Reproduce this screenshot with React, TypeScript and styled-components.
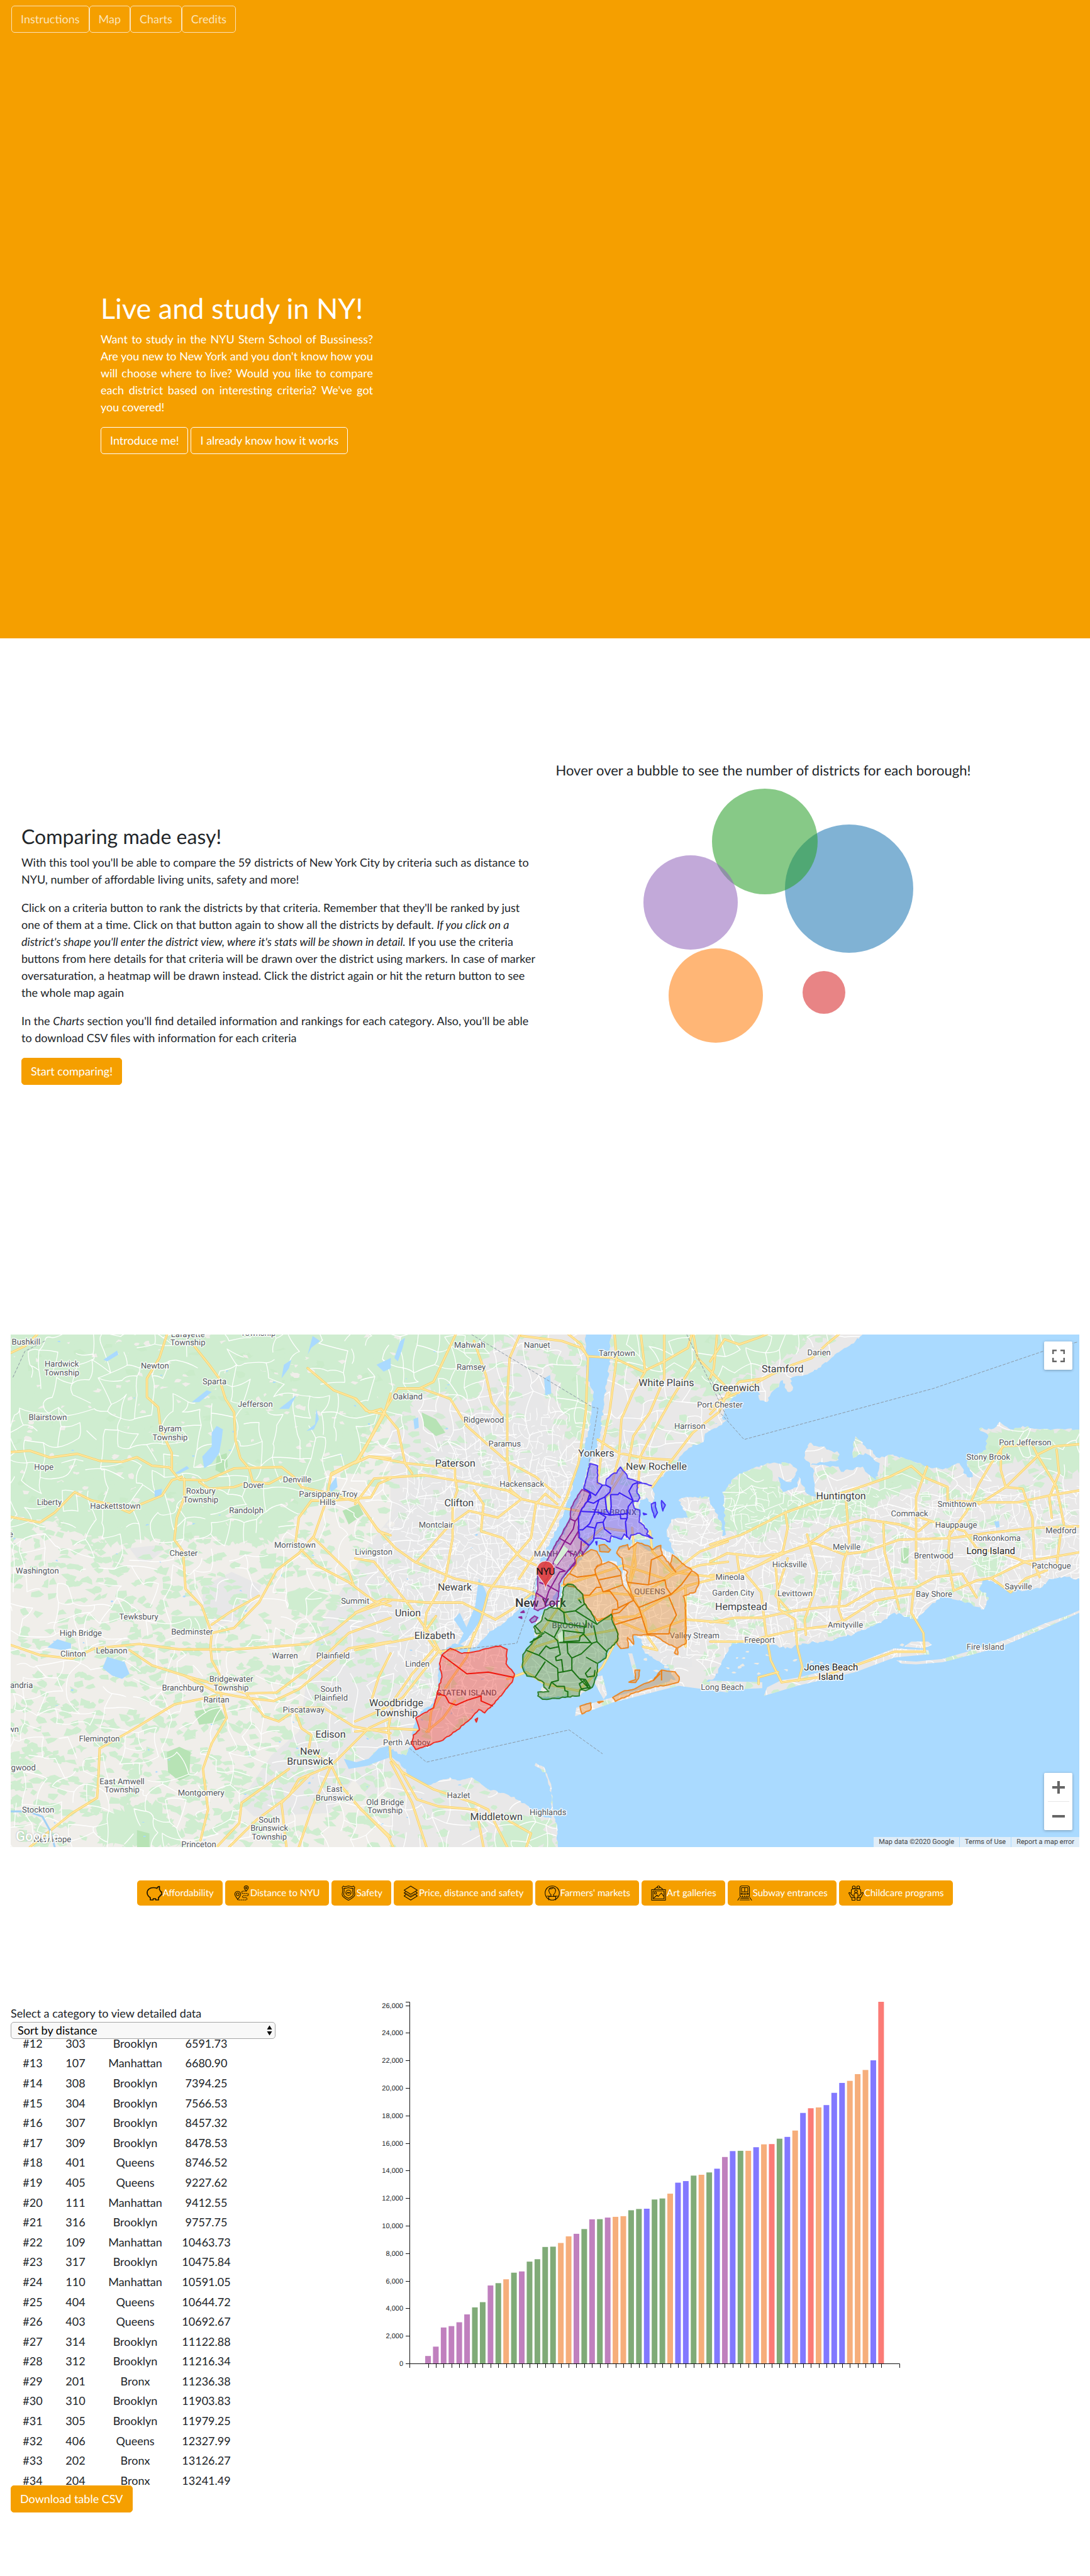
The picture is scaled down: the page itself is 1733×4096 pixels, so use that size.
import React from "react";
import styled, { createGlobalStyle, css } from "styled-components";

const ORANGE = "#f59f00";

const GlobalStyle = createGlobalStyle`
  *, *::before, *::after { box-sizing: border-box; }
  body {
    margin: 0;
    background: #fff;
    color: #212529;
    font-family: Lato, "Open Sans", sans-serif;
    font-size: 18px;
    line-height: 27px;
    text-rendering: geometricPrecision;
  }
`;

/* ---------- shared controls ---------- */

const Button = styled.button<{ $kind?: "solid" | "outline" | "muted" }>`
  padding: 7px 14px;
  border: 1px solid ${ORANGE};
  border-radius: 5px;
  background: ${ORANGE};
  color: #fff;
  font: inherit;
  text-rendering: inherit;
  cursor: pointer;
  ${(p) => p.$kind === "outline" && css`border-color: #fff;`}
  ${(p) =>
    p.$kind === "muted" &&
    css`
      border-color: #fbe3b8;
      color: #fbe3b8;
    `}
`;

/* ---------- hero ---------- */

const Hero = styled.header`
  display: flex;
  flex-direction: column;
  min-height: 1015px;
  background: ${ORANGE};
  color: #fff;
`;

const Nav = styled.nav`
  display: flex;
  padding: 9px 18px;
`;

const HeroBody = styled.div`
  width: 433px;
  margin: 402px 0 0 160px;
`;

const Title = styled.h1`
  margin: 0 0 9px;
  font-size: 45px;
  font-weight: 400;
  line-height: 54px;
`;

const Pitch = styled.p`
  margin: 0 0 18px;
  text-align: justify;
`;

const ButtonRow = styled.div`
  display: flex;
  gap: 4px;
  white-space: nowrap;
`;

/* ---------- instructions ---------- */

const Intro = styled.section`
  display: grid;
  grid-template-columns: 1fr 1fr;
  align-items: center;
  min-height: 1006px;
  padding: 0 17px;
`;

const IntroColumn = styled.div`
  padding-left: 17px;
`;

const Heading = styled.h2`
  margin: 0 0 9px;
  font-size: 32px;
  font-weight: 400;
  line-height: 38px;
`;

const Paragraph = styled.p`
  margin: 0 0 18px;
`;

const Lead = styled.p`
  margin: 0 0 5px;
  font-size: 22px;
  line-height: 33px;
`;

const Bubbles = styled.svg`
  display: block;
  width: 100%;
  height: 582px;
`;

/* ---------- map ---------- */

const MapFrame = styled.section`
  position: relative;
  margin: 101px 17px 0;
  overflow: hidden;
  font-family: Roboto, "Liberation Sans", sans-serif;
`;

const MapDrawing = styled.svg`
  display: block;
  width: 100%;
  height: auto;
`;

const MapControl = styled.div<{ $corner: "top" | "bottom" }>`
  position: absolute;
  right: 11px;
  ${(p) => (p.$corner === "top" ? "top: 11px;" : "bottom: 27px;")}
  display: flex;
  flex-direction: column;
  align-items: center;
  border-radius: 2px;
  background: #fff;
  box-shadow: 0 1px 4px rgba(0, 0, 0, 0.3);
`;

const MapButton = styled.button`
  display: grid;
  place-items: center;
  width: 45px;
  height: 45px;
  padding: 0;
  border: 0;
  background: none;
  cursor: pointer;
`;

const MapDivider = styled.div`
  width: 34px;
  height: 1px;
  background: #e6e6e6;
`;

const MapLogo = styled.span`
  position: absolute;
  left: 8px;
  bottom: 4px;
  color: #fff;
  font-size: 22px;
  font-weight: 500;
  line-height: 24px;
  text-shadow: 0 0 2px rgba(0, 0, 0, 0.35);
`;

const Attribution = styled.div`
  position: absolute;
  right: 0;
  bottom: 0;
  display: flex;
  gap: 1px;
  color: #444;
  font-size: 11px;
  line-height: 16px;
`;

const Credit = styled.span`
  padding: 0 8px;
  background: rgba(245, 245, 245, 0.7);
`;

const CreditLink = styled(Credit).attrs({ as: "a" })`
  color: inherit;
  text-decoration: none;
`;

/* ---------- criteria bar ---------- */

const Criteria = styled.div`
  display: flex;
  justify-content: center;
  gap: 4px;
  margin-top: 53px;
  padding: 0 17px;
`;

const CriteriaButton = styled.button`
  display: flex;
  align-items: center;
  height: 40px;
  padding: 0 14px;
  border: 0;
  border-radius: 5px;
  background: ${ORANGE};
  color: #fff;
  font: inherit;
  font-size: 15px;
  text-rendering: inherit;
  white-space: nowrap;
  cursor: pointer;
`;

const Icon = styled.svg`
  width: 26px;
  height: 24px;
  fill: none;
  stroke: #1a1200;
  stroke-width: 1.1;
  stroke-linejoin: round;
  stroke-linecap: round;
`;

/* ---------- charts ---------- */

const Charts = styled.section`
  display: flex;
  align-items: flex-start;
  margin-top: 145px;
  padding: 0 17px 100px;
`;

const DataColumn = styled.div`
  flex: 0 0 33.333%;
  padding-top: 13px;
`;

const Label = styled.label`
  display: block;
`;

const SelectBox = styled.div`
  position: relative;
  width: 421px;
`;

const Select = styled.select`
  display: block;
  width: 100%;
  height: 27px;
  padding: 0 10px;
  border: 1px solid #a6a6a6;
  border-radius: 5px;
  appearance: none;
  background: #f8f8f8;
  color: #000;
  font: inherit;
  text-rendering: inherit;
  line-height: 25px;
`;

const SelectArrows = styled.svg`
  position: absolute;
  top: 5px;
  right: 5px;
  width: 9px;
  height: 17px;
  pointer-events: none;
`;

const TableWindow = styled.div`
  display: flex;
  flex-direction: column;
  justify-content: center;
  height: 710px;
  overflow: hidden;
`;

const Table = styled.table`
  flex: none;
  width: 362px;
  height: 727px;
  table-layout: fixed;
  border-collapse: collapse;
  text-align: center;

  td { padding: 0; }
`;

const ChartColumn = styled.div`
  flex: 1;
  padding-left: 17px;
`;

const BarChart = styled.svg`
  display: block;
  font-family: "Liberation Sans", Arial, sans-serif;
  font-size: 11px;
  overflow: visible;
`;

/* ---------- map data ----------
   Shapes are lists of "x,y" points. The letter in front of a run of points
   names the map sheet (A west, B centre, C east, D city detail) they are
   measured on. */

type Sheet = { x: number; y: number; sx: number; sy: number };
const SHEETS: Record<string, Sheet> = {
  A: { x: -17, y: -11.3, sx: 0.396, sy: 0.54 },
  B: { x: 547.6, y: -11.3, sx: 0.378, sy: 0.54 },
  C: { x: 1112.1, y: -11.3, sx: 0.3852, sy: 0.54 },
  D: { x: 773.4, y: 180.6, sx: 0.216, sy: 0.2736 },
};

const project = (sheet: string, x: number, y: number): [number, number] => {
  const s = SHEETS[sheet];
  return [Math.round((s.x + x * s.sx) * 10) / 10, Math.round((s.y + y * s.sy) * 10) / 10];
};

const trace = (shape: string, closed = false): string => {
  let sheet = "A";
  const out: string[] = [];
  shape.split(/\s+/).forEach((token) => {
    if (SHEETS[token]) {
      sheet = token;
      return;
    }
    const [x, y] = token.split(",").map(Number);
    out.push(project(sheet, x, y).join(" "));
  });
  return "M" + out.join("L") + (closed ? "Z" : "");
};

const traceAll = (sheet: string, shapes: string[], closed = false) =>
  shapes.map((s) => trace(`${sheet} ${s}`, closed)).join("");

const random = (seed: number) => () => {
  seed = (seed * 1664525 + 1013904223) % 4294967296;
  return seed / 4294967296;
};

/* adds small wiggles between the points, for coasts */
const ragged = (path: string, seed: number, size: number): string => {
  const rnd = random(seed);
  const pts = path
    .replace(/[MZ]/g, "")
    .split("L")
    .map((p) => p.split(" ").map(Number));
  const out: string[] = [];
  pts.forEach((p, i) => {
    const q = pts[(i + 1) % pts.length];
    const len = Math.hypot(q[0] - p[0], q[1] - p[1]);
    const n = len > 150 ? 1 : Math.max(1, Math.round(len / 4));
    for (let k = 0; k < n; k++) {
      const j = k === 0 ? 0 : size;
      out.push(
        `${(p[0] + ((q[0] - p[0]) * k) / n + (rnd() - 0.5) * j).toFixed(1)} ${(
          p[1] +
          ((q[1] - p[1]) * k) / n +
          (rnd() - 0.5) * j
        ).toFixed(1)}`
      );
    }
  });
  return "M" + out.join("L") + "Z";
};

const MAINLAND =
  "A 20,10 B 970,10 970,60 975,150 1003,190 985,300 940,400 905,490 880,540 850,590 820,630 780,680 765,720 757,770 720,790 700,800 690,830 660,850 600,880 560,900 510,940 480,945 450,935 420,930 395,940 362,955 350,1000 350,1060 330,1105 260,1140 248,1170 230,1235 215,1260 180,1255 160,1240 130,1255 190,1285 230,1320 300,1350 400,1325 440,1335 490,1325 560,1360 640,1375 720,1405 790,1440 825,1445 825,1370 800,1310 755,1290 760,1282 795,1295 825,1350 835,1440 850,1470 852,1545 A 20,1545";
const WESTCHESTER =
  "B 1078,10 1070,100 1060,160 1045,240 1030,310 1010,370 985,400 960,470 940,510 905,570 855,640 800,700 765,760 752,810 760,832 800,825 830,800 855,770 870,730 930,680 975,640 1010,620 1070,630 1090,610 1160,625 1250,622 1200,560 1195,510 1225,500 1250,530 1260,490 1245,470 1290,440 1330,410 1380,370 1420,345 1455,340 1480,310 1530,290 1568,270 C 15,285 45,285 60,240 110,195 200,180 205,215 235,220 250,195 300,155 320,190 340,185 330,150 390,140 440,125 500,90 560,60 600,40 640,10";
const LONG_ISLAND =
  "B 990,655 905,715 875,750 870,780 855,820 800,830 750,880 755,910 790,905 720,950 700,990 720,1020 770,1035 800,1050 770,1075 770,1090 940,1085 990,1065 1020,1030 1020,990 1060,955 1100,920 1120,945 1170,935 1170,905 1200,915 1220,960 1320,1000 1330,1020 1360,1040 1400,1055 C -30,1050 20,1030 50,980 60,970 90,930 150,930 250,935 330,945 380,930 470,925 560,910 640,890 720,860 760,840 850,860 900,825 960,790 1000,800 1060,810 1130,830 1150,795 1110,770 1130,740 1200,760 1300,775 1370,765 1400,740 1470,735 1540,745 1540,300 1360,300 1290,290 1240,300 1195,278 1160,300 1110,298 1145,315 1140,360 1060,395 1085,440 1060,440 1030,400 960,418 900,410 820,390 740,375 700,385 640,350 600,320 590,345 590,385 640,370 700,400 685,450 650,430 630,410 540,425 530,410 415,405 530,390 530,370 410,340 388,385 425,415 435,500 400,490 365,440 360,470 300,485 280,440 320,455 335,455 360,420 330,400 230,402 120,430 50,485 60,540 65,610 50,615 45,570 0,520 B 1490,500 1400,500 1360,510 1400,560 1330,565 1310,600 1345,670 1290,650 1240,660 1185,632 1130,650 1100,655 1130,700 1120,730 1100,690 1040,690 1020,660";
const STATEN =
  "365,965 400,945 450,960 500,955 610,938 640,948 635,990 670,1020 660,1045 600,1095 545,1135 520,1125 490,1150 430,1185 370,1215 255,1243 238,1225 245,1200 270,1185 255,1150 330,1120 345,1075 365,1030 355,990";
const BARRIERS = [
  "B 925,1145 1080,1105 1360,1055 1568,1075 1568,1050 1360,1035 1080,1090 930,1120",
  "C -40,1070 215,1062 215,1045 0,1040",
  "C 222,1085 360,1055 600,1015 760,972 905,962 900,950 760,945 600,990 380,1028 290,1040 235,1060",
  "C 768,980 790,990 850,992 960,986 1200,941 1380,886 1540,835 1540,828 1470,850 1380,872 1220,920 1050,957 960,976 850,984",
  "C 800,940 830,925 900,925 915,935 880,945",
  "B 1000,1030 1040,1025 1060,1080 1045,1095 1010,1050",
  "B 1150,960 1165,960 1185,1010 1175,1030",
];

const LAND =
  ragged(trace(MAINLAND, true), 3, 3) +
  ragged(trace(WESTCHESTER, true), 5, 4) +
  ragged(trace(LONG_ISLAND, true), 7, 4) +
  trace("B " + STATEN, true) +
  BARRIERS.map((b) => trace(b, true)).join("");

const FOREST = [
  "A 20,10 1568,10 B 700,10 560,60 520,200 430,210 300,180 200,260 60,300 A 1450,420 1320,420 1280,520 1180,560 1080,640 900,630 800,620 700,640 600,625 450,640 300,600 200,560 20,640",
  "B 1080,10 1568,10 C 450,10 330,80 200,120 60,180 0,200 B 1450,180 1330,120 1250,190 1160,120 1080,150",
  "B 800,60 930,120 1000,200 960,320 900,330 860,200",
  "C 50,485 120,430 230,402 300,485 435,500 700,470 740,375 900,410 1000,450 900,450 740,500 600,560 400,560 200,620 60,600",
  "C 1145,315 1240,300 1540,300 1540,420 1400,440 1300,380 1200,400 1100,420 1060,400",
  "A 400,1430 640,1400 760,1530 400,1530",
  "B 640,1440 760,1440 830,1500 845,1530 560,1530",
];

const PARKS = [
  "A 870,380 910,370 915,410 890,430 865,420",
  "A 1375,540 1440,520 1460,550 1400,580",
  "A 670,1250 720,1235 765,1250 760,1320 720,1335 675,1310",
  "A 780,1130 880,1115 905,1150 850,1165 800,1170",
  "A 550,1480 600,1490 600,1530 550,1530",
  "B 280,250 340,270 380,310 340,320 290,290",
  "C 790,650 820,645 818,695 788,695",
];

const MEADOWS = [
  "A 1150,780 1230,765 1320,790 1230,850 1160,820",
  "A 690,850 830,850 830,890 760,900 690,880",
  "A 1040,670 1110,665 1100,710 1050,710",
  "C 1080,680 1190,665 1185,730 1110,735",
  "C 440,720 500,715 510,740 450,760",
];

const URBAN =
  "A 1568,560 1480,640 1300,860 1250,950 1200,1190 1090,1260 960,1400 1020,1440 1320,1430 1420,1330 1500,1400 1568,1300 B 240,1380 320,1440 500,1370 860,1000 1420,1000 1300,350 1150,250 1020,330 930,420 860,330 700,60 560,200 350,330 150,560";
const URBAN_PATCHES = [
  "A 820,760 930,720 1050,760 1030,800 960,860 860,880 810,810",
  "A 980,345 1100,260 1160,235 1150,280 1050,340 960,400",
  "A 520,650 650,640 650,660 600,690 560,690",
  "A 390,570 470,540 480,570 430,600",
];

const WATERS = [
  "A 870,290 895,300 890,330 880,370 850,400 820,415 812,380 850,350 850,310",
  "A 430,970 500,985 520,1020 490,1035 450,1025 412,1003",
  "A 190,942 230,918 285,930 285,945 250,950",
  "A 415,95 470,68 475,80 430,100",
  "A 1120,240 1190,200 1160,240",
  "A 1320,470 1350,440 1355,470 1330,485",
  "A 620,480 650,475 648,495 622,505",
  "A 1235,80 1255,25 1285,40 1250,60",
  "A 1130,150 1140,110 1170,95 1160,120",
  "A 1270,240 1280,270 1260,300 1230,305 1265,285",
  "A 700,430 750,408 760,415 720,430",
  "A 770,220 830,185 850,190 800,220",
  "B 165,90 190,40 210,30 200,60 180,100",
  "B 795,150 820,140 825,195 800,200",
  "B 245,270 265,265 268,295 250,300",
  "B 90,110 150,90 150,120 120,130",
  "B 520,740 545,770 560,800 540,850 500,890 470,920 430,938 470,880 505,820",
  "B 415,860 440,840 480,900 470,915",
  "B 60,1270 130,1250 160,1262 90,1280 40,1290 0,1290",
  "A 1568,1230 1520,1240 1480,1270 1430,1280 1380,1270 1400,1300 1480,1290 1568,1260",
  "C 1172,572 1192,570 1195,588 1180,590",
];

const HIGHWAYS: Record<string, string[]> = {
  A: [
    "43,367 120,363 200,383 310,372 400,393 490,396 550,382 610,407 680,412 720,448 830,450 940,415 1130,411 1180,440 1210,470 1300,485 1440,515 1520,600 1568,612",
    "43,558 160,574 220,545 300,485 370,510 440,520 520,545 560,522 650,495 690,450 730,440",
    "675,10 640,90 590,150 590,205 635,235 645,300 690,370 690,415",
    "43,75 100,55 150,20",
    "780,55 840,110 880,150 905,210 940,250 945,330 965,385 1000,415 1015,455 1080,460 1130,440",
    "1235,120 1340,185 1430,210 1470,245 1540,255",
    "1568,195 1540,260 1440,390 1330,430 1310,510 1260,615 1200,665 1110,715 1040,810 940,885 850,900 845,940",
    "740,445 740,500 710,560 700,625 735,660 745,770 810,820 845,890",
    "43,935 160,965 290,975 380,945 560,932 720,948 940,948 1240,932 1330,900 1430,840 1568,805",
    "520,950 610,995 740,1025 870,1075 980,1090 1100,1100 1200,1065 1300,1005 1400,945 1568,925",
    "740,1025 860,1050 990,1078 1110,1075 1300,970 1400,900 1568,855",
    "845,940 850,980 880,1020 885,1075 910,1150 850,1225 815,1300 835,1420 805,1510",
    "870,1085 700,1110 520,1190 400,1240 395,1330 390,1385 290,1430 120,1530",
    "990,1080 1060,1145 1120,1160 1200,1120 1300,1120 1420,1175 1568,1195",
    "850,875 920,840 1040,790",
    "1200,1530 1250,1420 1330,1290 1480,1180 1568,1150",
    "920,1530 1030,1450 1160,1380 1200,1330 1330,1290",
    "1210,655 1270,700 1400,750 1500,805 1568,820",
    "1260,620 1330,670 1400,720 1420,760",
    "1568,385 1480,380 1420,400 1330,435",
    "1190,1140 1210,1180 1250,1200 1240,1240 1330,1290 1370,1350 1450,1420 1568,1500",
    "1150,1530 1130,1400 1240,1320",
    "870,1530 960,1460 970,1400 1160,1300",
    "1568,445 1520,460 1490,500 1330,510 1250,510 1200,560 1185,640",
    "1568,960 1520,1030 1495,1090",
    "800,455 840,475 940,470 980,460",
  ],
  B: [
    "430,10 330,160 270,180 180,180 120,250 60,330 0,400",
    "0,520 80,445 290,435 500,460 640,480 700,505 850,530 940,540",
    "700,10 650,90 640,200 640,390 655,480 700,505",
    "500,40 550,140 575,220 620,260",
    "0,210 60,250 110,240 180,300 210,400 240,430",
    "280,180 400,210 470,290 550,340 640,395 760,440 860,500",
    "0,400 60,380 220,400 420,415 420,440",
    "850,520 800,490 760,520 740,620 640,700 560,780 530,860 480,940",
    "0,500 90,590 170,650 250,690 420,740 560,760 700,770 770,790",
    "420,440 430,480 410,520 410,620 380,740 300,840 290,900 340,950",
    "500,480 540,520 530,600 620,620 700,680 760,700",
    "0,680 80,690 230,820 330,920 360,960",
    "0,840 120,800 300,810 450,810 590,860 660,830 750,780",
    "0,950 130,930 280,910 340,850",
    "260,690 400,580 480,540 600,560 700,505",
    "340,940 240,1020 160,1100 140,1180 150,1270 200,1310 330,1360 500,1400 560,1420 640,1530",
    "0,1160 100,1130 200,1090 350,955 480,940",
    "0,1190 140,1180 260,1185",
    "150,1280 240,1400 300,1530",
    "180,1290 260,1390 350,1410 510,1420 540,1530",
    "0,1400 140,1500 160,1530",
    "720,1530 740,1490 640,1450 540,1440",
    "880,10 950,50 980,90 970,250 940,400 890,500 800,620 690,740",
    "700,25 870,40 950,60 980,85 1090,90 1210,130 1300,100 1400,60 1420,10",
    "1090,10 1100,90 1070,250 1040,350 1020,460",
    "1200,10 1220,130 1170,190 1120,270 1110,380 1080,460",
    "1300,10 1300,150 1240,250 1170,320 1150,400 1060,500",
    "1568,190 1530,250 1420,310 1300,420 1250,470",
    "1430,100 1340,200 1260,300 1200,380 1190,470",
    "1420,10 1440,90 1568,180",
    "1020,330 1110,370 1220,385 1330,390",
    "1165,590 1180,700 1150,770",
    "1240,600 1250,660 1330,720 1568,740",
    "870,760 960,740 1130,700 1300,740 1450,660 1568,630",
    "940,800 1040,780 1200,790 1330,730 1450,700 1568,690",
    "1090,860 1230,900 1390,860 1568,870",
    "1020,860 1180,850 1290,800 1400,760 1568,730",
    "1180,640 1150,770 1220,860 1230,910 1270,950 1210,940",
    "710,980 780,900 860,820 940,900",
    "700,1000 760,940 850,920 1100,890",
    "640,1035 720,1015 800,1050 940,1070 1040,1000 1100,920",
    "310,1190 320,1130 400,1040 470,970 500,900",
    "300,1190 370,1150 420,1100",
    "1390,760 1390,940",
    "1140,600 1040,590 960,640",
  ],
  C: [
    "0,640 130,610 310,545 450,510 640,465 740,440 830,408 880,440 980,470 980,510",
    "0,690 70,665 200,675 300,665 430,635 550,668 640,660 780,625 1000,620 1150,605 1350,590 1540,585",
    "0,730 140,720 320,660 400,640 500,590 640,565 780,580 860,600 910,570 850,555",
    "0,868 100,855 210,855 340,835 450,825 560,820 680,770 850,765 930,735 1040,725 1100,795",
    "0,925 150,925 260,905 360,890 480,880 560,860 680,805 830,785",
    "30,10 15,120 0,150",
    "0,255 60,210 120,160 220,150 340,110 420,90 480,50 540,15",
    "0,240 40,215 120,190 250,140",
    "0,100 60,35 120,50 200,30 250,15",
    "140,720 210,780 230,900 250,980 295,1045",
    "295,1045 450,1030 620,990 760,955 885,955 880,900 830,840 840,770",
    "310,545 320,590 300,660 200,700 120,720 110,670",
    "270,700 285,830 350,860 360,940 380,1000 365,1040",
    "400,610 440,720 430,780 390,860 395,905",
    "320,830 270,790 320,680",
    "560,500 575,640 550,690 530,830 545,860",
    "895,410 850,500 850,740",
    "715,580 720,660 760,770 780,830",
    "980,680 1005,775 1100,745 1160,738 1300,690 1540,660",
    "980,620 1060,540 1110,460 1160,400 1210,350 1330,345 1350,375 1420,350 1540,343",
    "1110,520 1220,470 1350,380",
    "1200,360 1200,420 1220,470 1290,475 1330,560 1340,700 1360,735",
    "1350,375 1430,470 1460,580",
    "1430,360 1440,430 1400,500 1410,560",
    "910,570 1050,600 1100,650 1230,670 1330,700",
    "1160,738 1240,780 1300,740 1390,715",
    "980,510 1100,515 1270,515 1400,495 1540,478",
    "1450,590 1430,700",
    "990,600 980,690",
    "200,1050 200,1030 280,1015",
  ],
};

const HIGHWAY_PATH = Object.entries(HIGHWAYS)
  .map(([sheet, list]) => traceAll(sheet, list))
  .join("");

const BORDERS =
  trace("B 490,21 1000,235 1022,238 960,500 755,750 745,800 680,930 480,945 360,950") +
  trace("B 230,1240 300,1280 900,1185 1040,1255") +
  trace("B 1395,21 1568,270") +
  trace("C 0,150 50,210 40,250 140,330 920,180 1375,70 1520,42") +
  trace("A 180,40 100,70 50,150");

/* how built-up a spot is, 0 to 1 */
const density = (x: number, y: number) => {
  const city = Math.exp(-((x - 830) ** 2) / 60000 - (y - 400) ** 2 / 80000);
  const island = x > 900 && y > 240 && y < 520 ? 0.55 : 0;
  return Math.max(city, island);
};

/* roads on a loosened grid; each stretch bends once on its way */
const buildStreets = (seed: number, cell: number, chance: (x: number, y: number) => number) => {
  const rnd = random(seed);
  const cols = Math.ceil(1699 / cell) + 1;
  const rows = Math.ceil(815 / cell) + 1;
  const node: number[][][] = [];
  for (let r = 0; r <= rows; r++) {
    node.push([]);
    for (let c = 0; c <= cols; c++) {
      node[r].push([
        Math.round(c * cell + (rnd() - 0.5) * cell * 0.9),
        Math.round(r * cell + (rnd() - 0.5) * cell * 0.9),
      ]);
    }
  }
  const stretch = (a: number[], b: number[]) => {
    const mx = Math.round((a[0] + b[0]) / 2 + (rnd() - 0.5) * cell * 0.5);
    const my = Math.round((a[1] + b[1]) / 2 + (rnd() - 0.5) * cell * 0.5);
    return `M${a.join(" ")}Q${mx} ${my} ${b.join(" ")}`;
  };
  let d = "";
  for (let r = 0; r < rows; r++) {
    for (let c = 0; c < cols; c++) {
      const a = node[r][c];
      const p = chance(a[0], a[1]);
      if (rnd() < p) d += stretch(a, node[r][c + 1]);
      if (rnd() < p) d += stretch(a, node[r + 1][c]);
    }
  }
  return d;
};

const COUNTRY_ROADS = buildStreets(11, 25, (x) => (x < 620 ? 0.55 : 0.62));
const CITY_STREETS = buildStreets(23, 9, (x, y) => (density(x, y) > 0.35 ? density(x, y) * 0.75 : 0));

const buildShards = (
  seed: number,
  count: number,
  size: number,
  keep: (x: number, y: number, r: number) => boolean
) => {
  const rnd = random(seed);
  let d = "";
  for (let i = 0; i < count; i++) {
    const x = rnd() * 1699;
    const y = rnd() * 815;
    if (!keep(x, y, rnd())) continue;
    const n = 4 + Math.floor(rnd() * 4);
    const turn = rnd() * 6;
    const points: string[] = [];
    for (let k = 0; k < n; k++) {
      const a = turn + (k / n) * Math.PI * 2;
      const r = size * (0.3 + rnd());
      points.push(`${Math.round(x + Math.cos(a) * r * 1.3)} ${Math.round(y + Math.sin(a) * r * 0.8)}`);
    }
    d += "M" + points.join("L") + "Z";
  }
  return d;
};

const FIELDS = buildShards(41, 1200, 5, (x, y) => x < 620 && y < 330);
const WOODS = buildShards(57, 5200, 8, (x, y, r) => r > density(x, y) * 1.25 && (x < 600 || r > 0.66));
const DEEP_WOODS = buildShards(71, 420, 8, (x, y) => y < 330);
const PONDS = buildShards(83, 200, 2, (x) => x < 760);
const MARSH =
  buildShards(91, 2600, 3, (x, y) => x > 1115 && x < 1330 && y > 498 && y < 545) +
  buildShards(97, 1600, 4, (x, y) => x > 985 && x < 1060 && y > 500 && y < 560) +
  buildShards(99, 1800, 3, (x, y) => x > 1330 && x < 1470 && y > 485 + (1470 - x) * 0.05 && y < 508);

type Borough = { color: string; sheet: string; fill: string[]; lines: string[] };
const BOROUGHS: Borough[] = [
  {
    color: "#f0160c",
    sheet: "B",
    fill: [STATEN, "505,1155 515,1150 510,1162"],
    lines: [
      "365,965 470,1020 560,1015 665,1030",
      "345,1078 380,1085 395,1105 425,1112 470,1098 530,1085 530,1100 580,1115",
    ],
  },
  {
    color: "#ee7d0e",
    sheet: "D",
    fill: [
      "690,590 735,600 760,640 770,670 730,690 820,660 870,680 910,720 915,755 925,795 1005,885 960,780 950,740 960,720 930,705 920,640 880,610 900,575 960,560 970,590 1030,548 1120,570 1140,590 1205,565 1215,620 1315,720 1275,670 1290,620 1480,740 1485,780 1460,835 1370,860 1385,900 1390,1135 1330,1160 1330,1200 1305,1190 1320,1160 1250,1135 1160,1090 1100,1085 1000,1085 1005,1140 960,1100 965,1160 910,1165 880,1130 890,1080 865,1030 850,965 740,1005 640,900 630,850 580,810 490,795 495,760 580,680 585,640",
      "850,1450 925,1415 1010,1400 1080,1370 1150,1350 1210,1290 1310,1300 1340,1330 1335,1360 1290,1370 1150,1390 1000,1425 870,1472",
      "970,1360 1020,1345 1015,1290 1050,1290 1040,1340 1020,1362",
      "610,1500 690,1480 690,1520 625,1545",
      "740,1475 780,1472 750,1482",
      "750,565 790,560 835,590 820,605 755,600",
    ],
    lines: [
      "535,730 590,750 690,740 725,735 720,705 740,685",
      "725,730 780,835 925,795",
      "750,765 910,740",
      "780,835 830,830 885,890 890,930 1005,885",
      "635,855 680,855 730,810 770,808",
      "890,935 850,940 845,965 900,955 970,900",
      "870,1025 1060,980",
      "1005,885 1045,930 1105,1080 1265,1080 1275,1030 1320,970 1265,865",
      "1045,925 1280,850 1360,790 1430,715",
      "960,780 1110,795 1235,765 1245,810 1280,850",
      "1115,795 1135,650 1220,620",
      "1210,1350 1210,1290",
      "1150,1350 1200,1310",
    ],
  },
  {
    color: "#1a7314",
    sheet: "D",
    fill: [
      "520,790 560,795 630,850 640,900 690,950 735,1025 840,965 850,1010 870,1040 890,1080 885,1120 810,1180 800,1220 740,1250 735,1320 700,1390 650,1410 610,1405 605,1440 520,1445 440,1455 335,1460 300,1440 300,1418 380,1415 345,1390 345,1365 270,1330 220,1325 185,1270 190,1200 215,1170 240,1150 270,1110 345,1075 290,1080 270,1040 320,1010 350,940 400,925 460,935 480,880 490,810",
    ],
    lines: [
      "490,950 500,1020",
      "440,925 490,955 575,945 645,905",
      "575,945 735,1025",
      "350,985 370,1000 500,1020 655,1040 655,1000",
      "345,1065 420,1100 460,1040",
      "480,1060 640,1075 640,1040",
      "490,1065 490,1125 605,1120 610,1095 635,1080",
      "635,1080 695,1135 735,1125 710,1030",
      "455,1130 515,1130 690,1130",
      "700,1135 620,1195 550,1220 520,1190 515,1130",
      "420,1100 445,1120 465,1200 430,1215 435,1235 475,1230 485,1300 550,1290 550,1220",
      "310,1200 360,1150 390,1165 450,1155",
      "215,1175 310,1205 445,1280 450,1350 400,1360 380,1400",
      "280,1330 355,1240",
      "450,1305 485,1300",
      "550,1290 600,1335 680,1400",
      "400,1360 440,1385 495,1385 500,1410 520,1415 520,1445",
      "735,1125 810,1185",
      "655,1215 700,1235 735,1250",
      "605,1340 650,1345 685,1390 620,1400 605,1370 640,1350 670,1385",
      "690,1275 650,1310 665,1330 715,1325 720,1290",
      "600,880 620,900",
      "240,1130 330,1090",
      "275,1030 320,1070",
    ],
  },
  {
    color: "#8b1c8f",
    sheet: "D",
    fill: [
      "625,240 685,265 665,310 625,350 598,400 600,520 650,545 675,570 630,620 610,590 590,620 570,640 575,670 500,735 455,790 455,830 440,905 380,910 300,945 272,935 285,850 300,820 300,740 340,690 410,590 460,520 540,400 545,345 575,300",
      "240,1000 275,975 300,985 285,1005 255,1015",
      "160,983 180,980 182,990",
      "175,955 195,945 200,955",
    ],
    lines: [
      "535,410 575,425 600,400",
      "575,420 560,470 500,540 415,665 370,760 330,790",
      "460,525 540,560 600,480",
      "525,590 440,680",
      "510,595 565,620",
      "430,690 500,715 460,720 380,830 360,880",
      "375,800 455,835",
      "285,840 360,880 350,910",
      "575,660 500,735",
      "310,780 380,800",
      "620,540 615,600",
    ],
  },
  {
    color: "#3a1ef5",
    sheet: "D",
    fill: [
      "683,90 740,103 738,200 775,215 800,215 805,180 850,150 880,145 908,110 950,150 960,175 1020,190 1135,218 1080,205 1035,205 1030,260 1050,290 1035,310 1000,310 1010,350 1050,360 1045,430 1080,450 1110,485 1100,500 1145,525 1090,510 1050,495 985,505 975,530 950,510 935,500 915,530 880,520 840,510 830,545 760,525 715,525 680,565 605,520 600,470 598,400 625,350 665,310 685,265 660,245 637,235",
      "1135,325 1165,315 1165,340 1180,375 1160,405 1145,370",
      "1210,305 1238,330 1220,365 1210,330",
      "1075,378 1100,384 1080,387",
      "725,545 735,543 733,562",
    ],
    lines: [
      "637,235 700,262 725,275 775,215",
      "685,265 690,285 665,310 710,320 750,300 790,285 830,255 835,230 800,215",
      "620,368 740,372 830,390 900,385 960,380 965,340 1000,305",
      "750,300 715,380 680,440 630,475 605,475",
      "740,372 800,400 780,430 735,435 720,470 710,530",
      "660,455 720,465",
      "780,430 790,470 840,500",
      "835,270 890,270 900,260 1000,305 970,250 1000,210 1035,200",
      "960,400 945,430 955,520",
      "905,380 910,410 955,410 960,380",
      "835,270 840,340 830,390",
      "795,285 805,360 830,390",
    ],
  },
];

type Tone = "town" | "city" | "metro" | "borough" | "region";
const TONES: Record<Tone, { size: number; weight: number; fill: string }> = {
  town: { size: 13, weight: 400, fill: "#54585e" },
  city: { size: 16, weight: 400, fill: "#3c4043" },
  metro: { size: 19, weight: 500, fill: "#303336" },
  borough: { size: 13, weight: 500, fill: "#6c6a78" },
  region: { size: 15, weight: 400, fill: "#222" },
};

/* sheet, x, y of the middle of the word, text, tone */
const LABELS: [string, number, number, string, Tone?][] = [
  ["A", 104, 43, "Bushkill"], ["A", 248, 108, "Hardwick"], ["A", 248, 134, "Township"],
  ["A", 754, 20, "Lafayette"], ["A", 754, 45, "Township"], ["A", 1036, 18, "Township"],
  ["A", 622, 114, "Newton"], ["A", 861, 159, "Sparta"], ["A", 1025, 226, "Jefferson"],
  ["A", 192, 266, "Blairstown"], ["A", 683, 299, "Byram"], ["A", 683, 324, "Township"],
  ["A", 176, 411, "Hope"], ["A", 198, 516, "Liberty"], ["A", 463, 526, "Hackettstown"],
  ["A", 806, 482, "Roxbury"], ["A", 806, 507, "Township"], ["A", 1018, 466, "Dover"],
  ["A", 1193, 449, "Denville"], ["A", 1318, 491, "Parsippany-Troy"], ["A", 1316, 516, "Hills"],
  ["A", 989, 539, "Randolph"], ["A", 1184, 641, "Morristown"], ["A", 737, 666, "Chester"],
  ["A", 150, 718, "Washington"], ["A", 1426, 806, "Summit"], ["A", 557, 852, "Tewksbury"],
  ["A", 771, 897, "Bedminster"], ["A", 324, 901, "High Bridge"], ["A", 294, 962, "Clinton"],
  ["A", 448, 953, "Lebanon"], ["A", 1144, 967, "Warren"], ["A", 1337, 968, "Plainfield"],
  ["A", 928, 1036, "Bridgewater"], ["A", 928, 1061, "Township"], ["A", 734, 1062, "Branchburg"],
  ["A", 869, 1097, "Raritan"], ["A", 1329, 1066, "South"], ["A", 1329, 1091, "Plainfield"],
  ["A", 1219, 1127, "Piscataway"], ["A", 86, 1055, "andria"], ["A", 54, 1184, "wn"],
  ["A", 399, 1212, "Flemington"], ["A", 94, 1297, "gwood"], ["A", 490, 1337, "East Amwell"],
  ["A", 490, 1362, "Township"], ["A", 807, 1371, "Montgomery"], ["A", 153, 1420, "Stockton"],
  ["A", 210, 1507, "New Hope"], ["A", 798, 1522, "Princeton"], ["A", 1343, 1360, "East"],
  ["A", 1343, 1385, "Brunswick"], ["A", 1081, 1450, "South"], ["A", 1081, 1475, "Brunswick"],
  ["A", 1081, 1500, "Township"], ["A", 1327, 1199, "Edison", "city"], ["A", 1245, 1249, "New", "city"],
  ["A", 1245, 1279, "Brunswick", "city"], ["A", 44, 610, "e"],
  ["B", 482, 53, "Mahwah"], ["B", 488, 117, "Ramsey"], ["B", 765, 53, "Nanuet"],
  ["B", 221, 205, "Oakland"], ["B", 541, 273, "Ridgewood"], ["B", 629, 343, "Paramus"],
  ["B", 1101, 77, "Tarrytown"], ["B", 1309, 163, "White Plains", "city"], ["B", 1408, 292, "Harrison"],
  ["B", 1014, 370, "Yonkers", "city"], ["B", 1267, 409, "New Rochelle", "city"],
  ["B", 421, 400, "Paterson", "city"], ["B", 701, 461, "Hackensack"], ["B", 437, 517, "Clifton", "city"],
  ["B", 340, 582, "Montclair"], ["B", 78, 662, "Livingston"], ["B", 419, 765, "Newark", "city"],
  ["B", 222, 841, "Union", "city"], ["B", 335, 908, "Elizabeth", "city"], ["B", 262, 992, "Linden"],
  ["B", 173, 1106, "Woodbridge", "city"], ["B", 173, 1136, "Township", "city"], ["B", 217, 1223, "Perth Amboy"],
  ["B", 435, 1379, "Hazlet"], ["B", 126, 1398, "Old Bridge"], ["B", 126, 1423, "Township"],
  ["B", 594, 1442, "Middletown", "city"], ["B", 811, 1429, "Highlands"], ["B", 780, 811, "New York", "metro"],
  ["B", 857, 668, "MANHATTAN", "borough"], ["B", 1090, 545, "THE BRONX", "borough"],
  ["B", 1239, 778, "QUEENS", "borough"], ["B", 914, 879, "BROOKLYN", "borough"],
  ["B", 469, 1077, "STATEN ISLAND", "borough"], ["B", 1428, 908, "Valley Stream"],
  ["C", 449, 75, "Darien"], ["C", 299, 123, "Stamford", "city"], ["C", 107, 178, "Greenwich", "city"],
  ["C", 40, 228, "Port Chester"], ["C", 540, 497, "Huntington", "city"], ["C", 1300, 340, "Port Jefferson"],
  ["C", 1148, 382, "Stony Brook"], ["C", 1019, 521, "Smithtown"], ["C", 823, 548, "Commack"],
  ["C", 1015, 582, "Hauppauge"], ["C", 1183, 621, "Ronkonkoma"], ["C", 1448, 599, "Medford"],
  ["C", 1158, 657, "Long Island", "region"], ["C", 923, 672, "Brentwood"], ["C", 1408, 703, "Patchogue"],
  ["C", 563, 647, "Melville"], ["C", 328, 698, "Hicksville"], ["C", 82, 736, "Mineola"],
  ["C", 95, 782, "Garden City"], ["C", 350, 783, "Levittown"], ["C", 1272, 763, "Sayville"],
  ["C", 924, 785, "Bay Shore"], ["C", 128, 823, "Hempstead", "city"], ["C", 558, 877, "Amityville"],
  ["C", 204, 920, "Freeport"], ["C", 1136, 941, "Fire Island"], ["C", 499, 1001, "Jones Beach", "region"],
  ["C", 499, 1028, "Island", "region"], ["C", 50, 1059, "Long Beach"],
];

const CityMap = () => (
  <MapDrawing viewBox="0 0 1699 815" role="img" aria-label="Map of New York City districts">
    <defs>
      <clipPath id="land">
        <path d={LAND} />
      </clipPath>
    </defs>
    <rect width="1699" height="815" fill="#aadaff" />
    <path d={MARSH} fill="#ecebe6" />
    <path d={LAND} fill="#e9e8e8" />
    <g clipPath="url(#land)">
      <path d={trace("A 20,10 1568,10 1568,1545 20,1545", true)} fill="#f0eeea" />
      <path d={trace(URBAN, true)} fill="#e7e7e8" />
      {URBAN_PATCHES.map((p) => (
        <path key={p} d={trace(p, true)} fill="#e7e7e8" />
      ))}
      {FOREST.map((p) => (
        <path key={p} d={ragged(trace(p, true), 13, 14)} fill="#cfedd0" />
      ))}
      <path d={DEEP_WOODS} fill="#c6e9c6" fillOpacity="0.6" />
      <path d={FIELDS} fill="#f0eeea" />
      <path d={WOODS} fill="#cfedd0" />
      {MEADOWS.map((p) => (
        <path key={p} d={trace(p, true)} fill="#cfedd0" />
      ))}
      {PARKS.map((p) => (
        <path key={p} d={trace(p, true)} fill="#b7e3b5" />
      ))}
      <path d={PONDS} fill="#aadaff" />
      <g fill="none" stroke="#fff" strokeLinejoin="round" strokeLinecap="round">
        <path d={COUNTRY_ROADS} strokeWidth="1.3" />
        <path d={CITY_STREETS} strokeWidth="1" />
      </g>
      {WATERS.map((p) => (
        <path key={p} d={trace(p, true)} fill="#aadaff" />
      ))}
    </g>
    <g fill="none" strokeLinejoin="round" strokeLinecap="round">
      <path d={HIGHWAY_PATH} stroke="#fbcf63" strokeWidth="3.6" />
      <path d={HIGHWAY_PATH} stroke="#ffe79f" strokeWidth="2" />
      <path d={BORDERS} stroke="#8b97a3" strokeWidth="1" strokeDasharray="4 3" />
      <path d={trace("A 43,1425 110,1425 170,1440 200,1480 220,1530")} stroke="#9fd0f5" strokeWidth="3" />
    </g>
    <g
      textAnchor="middle"
      stroke="#fff"
      strokeOpacity="0.85"
      strokeWidth="3"
      strokeLinejoin="round"
      style={{ paintOrder: "stroke" }}
    >
      {LABELS.map(([sheet, cx, cy, text, tone = "town"]) => {
        const [x, y] = project(sheet, cx, cy);
        const t = TONES[tone];
        return (
          <text
            key={`${text}${cx}`}
            x={x}
            y={y + Math.round(t.size / 3)}
            fontSize={t.size}
            fontWeight={t.weight}
            fill={t.fill}
          >
            {text}
          </text>
        );
      })}
    </g>
    {BOROUGHS.map((b) => (
      <g key={b.color} stroke={b.color} strokeLinejoin="round" strokeWidth="2">
        {b.fill.map((shape) => (
          <path
            key={shape}
            d={ragged(trace(`${b.sheet} ${shape}`, true), 17, 1.6)}
            fill={b.color}
            fillOpacity="0.34"
            strokeOpacity="0.85"
          />
        ))}
        <path d={traceAll(b.sheet, b.lines)} fill="none" />
      </g>
    ))}
    <path d={trace("D 490,565 525,590 440,680 415,665", true)} fill="#d5eed5" />
    <path d={trace("D 803,292 828,272 832,365 812,355", true)} fill="#dcebc0" />
    <path d={trace("D 445,1085 480,1060 487,1120 455,1125", true)} fill="#cdeccb" />
    <g transform="translate(850.4 406)">
      <path
        d="M0 0C-1 -15 -14 -18 -14 -32A14 14 0 0 1 14 -32C14 -18 1 -15 0 0Z"
        fill="#e04040"
        fillOpacity="0.92"
        stroke="#fff"
        strokeWidth="1"
      />
      <text y="-24" textAnchor="middle" fontSize="16" fill="#111">
        NYU
      </text>
    </g>
  </MapDrawing>
);

/* ---------- criteria icons ---------- */

const CRITERIA: { label: string; icon: React.ReactNode }[] = [
  {
    label: "Affordability",
    icon: (
      <path
        strokeWidth="1.7"
        d="M17 4.5C18 2.5 19.5 1.5 21 1.5V6.5C22 7.5 22.5 8.5 23 10H24.5V15H23C22 17 21 18.5 19.5 19V23H15V21H11V23H6.5V19.5C3.5 17.5 1.5 14.5 1.5 11.5C1.5 6.5 6 3.5 11 3.5C13.5 3.5 15 3.5 17 4.5Z"
      />
    ),
  },
  {
    label: "Distance to NYU",
    icon: (
      <>
        <path d="M5.5 22.5C3 18 .8 16.5 .8 14A4.7 4.7 0 0 1 10.2 14C10.2 16.5 8 18 5.5 22.5Z" />
        <circle cx="5.5" cy="14" r="2.2" />
        <path d="M19 9C17 6.5 15.7 5.5 15.7 3.8A3.3 3.3 0 0 1 22.3 3.8C22.3 5.5 21 6.5 19 9Z" />
        <circle cx="19" cy="3.8" r="1.3" />
        <path strokeDasharray="1.6 1.5" d="M19 9H13Q11 11 13 12.7H21Q24 14.5 21 16.3H14Q12 18 14 19.5H19Q21.5 21.3 19 23H6" />
      </>
    ),
  },
  {
    label: "Safety",
    icon: (
      <>
        <path d="M12.5 23.5C8 21 2.5 18.5 2.5 14.5C2.5 11 4.5 9 2.5 3L4.5 .8Q6.5 2.5 9 1.5L12.5 .8L16 1.5Q18.5 2.5 20.5 .8L22.5 3C20.5 9 22.5 11 22.5 14.5C22.5 18.5 17 21 12.5 23.5Z" />
        <path d="M12.5 20.5C8 18.5 5 17 5 14.5C5 11 6.5 9 5.2 4.5Q8 5 12.5 3.5Q17 5 19.8 4.5C18.5 9 20 11 20 14.5C20 17 17 18.5 12.5 20.5Z" />
        <circle cx="12.5" cy="11.5" r="4.2" />
        <path d="M10 12.5L11.3 10.8L12.5 12.5L13.7 10.8L15 12.5" />
      </>
    ),
  },
  {
    label: "Price, distance and safety",
    icon: (
      <>
        <path d="M12.5 1L23 7.5L12.5 14L2 7.5Z" />
        <path d="M4.5 10L2 12L12.5 18.5L23 12L20.5 10" />
        <path d="M4.5 14.8L2 16.8L12.5 23.3L23 16.8L20.5 14.8" />
        <path strokeDasharray=".5 2" d="M5 12.5L12.5 16.5L20 12.5" />
      </>
    ),
  },
  {
    label: "Farmers' markets",
    icon: (
      <>
        <ellipse cx="12.5" cy="12" rx="11.3" ry="11.3" />
        <path d="M8 5Q12.5 1 17 5L18 8Q17 13 14.5 14.5V17H21M8 5L7 8Q8 13 10.5 14.5V17H4M8 5Q12 6.5 13.5 3.5L17 5M7 23V17.5H18V23" />
      </>
    ),
  },
  {
    label: "Art galleries",
    icon: (
      <>
        <rect x="1.5" y="6.5" width="22" height="17" />
        <rect x="3.8" y="8.8" width="17.4" height="12.4" />
        <path d="M5 6.5L10.5 2.5M20 6.5L14.5 2.5M5 20L10 15.5L12 17.5L17 12L20.5 17" />
        <circle cx="12.5" cy="2.5" r="1.8" />
        <circle cx="7.5" cy="12" r="1.7" />
      </>
    ),
  },
  {
    label: "Subway entrances",
    icon: (
      <>
        <path d="M5 16V4Q5 .8 8 .8H17Q20 .8 20 4V16Q20 18.5 17 18.5H8Q5 18.5 5 16Z" />
        <path d="M7.5 3.5H17.5V10H7.5ZM12.5 3.5V10M10.5 12.5H14.5M10.5 14.5H14.5M4.5 19L1.5 23.5M20.5 19L23.5 23.5M6 20.5H19M5 23H20M9 16.5V18M12.5 16.5V18M16 16.5V18" />
        <circle cx="7.8" cy="13.3" r="1.2" />
        <circle cx="17.2" cy="13.3" r="1.2" />
      </>
    ),
  },
  {
    label: "Childcare programs",
    icon: (
      <>
        <circle cx="9" cy="3" r="2.3" />
        <circle cx="16" cy="3" r="2.3" />
        <circle cx="12.5" cy="9.5" r="2.2" />
        <path d="M5 12V8Q5 5.5 8 5.5H17Q20 5.5 20 8V12M9.5 20V14Q9.5 12 12.5 12Q15.5 12 15.5 14V20" />
        <path d="M1 12L4.5 19H11V23.5H6V19M24 12L20.5 19H14V23.5H19V19M1 12Q3 10 5 14L8 16.5M24 12Q22 10 20 14L17 16.5" />
      </>
    ),
  },
];

/* ---------- table and bar chart data ---------- */

const ROWS: [string, string, string][] = [
  ["303", "Brooklyn", "6591.73"], ["107", "Manhattan", "6680.90"], ["308", "Brooklyn", "7394.25"],
  ["304", "Brooklyn", "7566.53"], ["307", "Brooklyn", "8457.32"], ["309", "Brooklyn", "8478.53"],
  ["401", "Queens", "8746.52"], ["405", "Queens", "9227.62"], ["111", "Manhattan", "9412.55"],
  ["316", "Brooklyn", "9757.75"], ["109", "Manhattan", "10463.73"], ["317", "Brooklyn", "10475.84"],
  ["110", "Manhattan", "10591.05"], ["404", "Queens", "10644.72"], ["403", "Queens", "10692.67"],
  ["314", "Brooklyn", "11122.88"], ["312", "Brooklyn", "11216.34"], ["201", "Bronx", "11236.38"],
  ["310", "Brooklyn", "11903.83"], ["305", "Brooklyn", "11979.25"], ["406", "Queens", "12327.99"],
  ["202", "Bronx", "13126.27"], ["204", "Bronx", "13241.49"],
];

const BAR_COLORS: Record<string, string> = {
  M: "#c080be",
  B: "#80ab78",
  Q: "#f6ae7b",
  X: "#8278ff",
  S: "#fb7b76",
};

const BARS =
  "M540 M1220 M2610 M2710 M2990 M3560 B4070 B4450 M5660 B5830 Q6110 B6590 M6681 B7394 B7567 B8457 B8479 Q8747 Q9228 M9413 B9758 M10464 B10476 M10591 Q10645 Q10693 B11123 B11216 X11236 B11904 B11979 Q12328 X13126 X13241 B13640 Q13700 B13870 X14140 M14990 X15420 B15440 Q15440 X15700 Q15910 S15930 B16320 X16450 Q16910 X18190 S18530 Q18590 X18760 X19650 X20370 Q20520 Q21010 Q21310 X22010 S26260"
    .split(" ")
    .map((s) => ({ color: BAR_COLORS[s[0]], value: Number(s.slice(1)) }));

const AXIS_X = 52;
const AXIS_TOP = 8;
const AXIS_BOTTOM = 583;
const scaleY = (v: number) => AXIS_BOTTOM - (v * (AXIS_BOTTOM - AXIS_TOP)) / 26260;
const barX = (i: number) => 76 + i * 12.42;

const DistanceChart = () => (
  <BarChart width="850" height="600" role="img" aria-label="Distance to NYU by district">
    {BARS.map((b, i) => (
      <rect key={i} x={barX(i)} y={scaleY(b.value)} width="9" height={AXIS_BOTTOM - scaleY(b.value)} fill={b.color} />
    ))}
    <g stroke="#111" fill="none">
      <path d={`M${AXIS_X - 7} ${AXIS_TOP + 0.5}H${AXIS_X - 0.5}V${AXIS_BOTTOM + 0.5}H${AXIS_X - 7}`} />
      <path d={`M${AXIS_X - 0.5} ${AXIS_BOTTOM + 7}V${AXIS_BOTTOM + 0.5}H830.5V${AXIS_BOTTOM + 7}`} />
      {BARS.map((_, i) => (
        <path key={i} d={`M${Math.round(barX(i) + 4.5) + 0.5} ${AXIS_BOTTOM}v7`} />
      ))}
      {Array.from({ length: 14 }, (_, i) => (
        <path key={i} d={`M${AXIS_X - 7} ${Math.round(scaleY(i * 2000)) + 0.5}h7`} />
      ))}
    </g>
    <g textAnchor="end" fill="#212529">
      {Array.from({ length: 14 }, (_, i) => (
        <text key={i} x={AXIS_X - 11} y={Math.round(scaleY(i * 2000)) + 4}>
          {(i * 2000).toLocaleString("en-US")}
        </text>
      ))}
    </g>
  </BarChart>
);

const BUBBLES = [
  { name: "Queens", x: 466, y: 167, r: 102, color: "#1f77b4" },
  { name: "Brooklyn", x: 332, y: 92, r: 84, color: "#2ca02c" },
  { name: "Bronx", x: 214, y: 189, r: 75, color: "#9467bd" },
  { name: "Manhattan", x: 254, y: 337, r: 75, color: "#ff7f0e" },
  { name: "Staten Island", x: 426, y: 332, r: 34, color: "#d62728" },
];

export default function App() {
  return (
    <>
      <GlobalStyle />
      <Hero>
        <Nav>
          {["Instructions", "Map", "Charts", "Credits"].map((name) => (
            <Button key={name} $kind="muted">
              {name}
            </Button>
          ))}
        </Nav>
        <HeroBody>
          <Title>Live and study in NY!</Title>
          <Pitch>
            Want to study in the NYU Stern School of Bussiness? Are you new to New York and you don't know how you will
            choose where to live? Would you like to compare each district based on interesting criteria? We've got you
            covered!
          </Pitch>
          <ButtonRow>
            <Button $kind="outline">Introduce me!</Button>
            <Button $kind="outline">I already know how it works</Button>
          </ButtonRow>
        </HeroBody>
      </Hero>

      <Intro>
        <IntroColumn>
          <Heading>Comparing made easy!</Heading>
          <Paragraph>
            With this tool you'll be able to compare the 59 districts of New York City by criteria such as distance to
            NYU, number of affordable living units, safety and more!
          </Paragraph>
          <Paragraph>
            Click on a criteria button to rank the districts by that criteria. Remember that they'll be ranked by just{" "}
            <br />
            one of them at a time. Click on that button again to show all the districts by default.{" "}
            <i>
              If you click on a <br />
              district's shape you'll enter the district view, where it's stats will be shown in detail.
            </i>{" "}
            If you use the criteria <br />
            buttons from here details for that criteria will be drawn over the district using markers. In case of marker{" "}
            <br />
            oversaturation, a heatmap will be drawn instead. Click the district again or hit the return button to see{" "}
            <br />
            the whole map again
          </Paragraph>
          <Paragraph>
            In the <i>Charts</i> section you'll find detailed information and rankings for each category. Also, you'll
            be able{" "}
            <br />
            to download CSV files with information for each criteria
          </Paragraph>
          <Button>Start comparing!</Button>
        </IntroColumn>
        <IntroColumn>
          <Lead>Hover over a bubble to see the number of districts for each borough!</Lead>
          <Bubbles role="img" aria-label="Boroughs by number of districts">
            {BUBBLES.map((b) => (
              <circle key={b.name} cx={b.x} cy={b.y} r={b.r} fill={b.color} fillOpacity="0.57" />
            ))}
          </Bubbles>
        </IntroColumn>
      </Intro>

      <MapFrame>
        <CityMap />
        <MapControl $corner="top">
          <MapButton aria-label="Toggle fullscreen view">
            <svg width="20" height="20" viewBox="0 0 20 20" fill="none" stroke="#666" strokeWidth="2.5">
              <path d="M1.2 7V1.2H7M13 1.2H18.8V7M18.8 13V18.8H13M7 18.8H1.2V13" />
            </svg>
          </MapButton>
        </MapControl>
        <MapControl $corner="bottom">
          <MapButton aria-label="Zoom in">
            <svg width="20" height="20" viewBox="0 0 20 20" fill="none" stroke="#666" strokeWidth="4">
              <path d="M0 10H20M10 0V20" />
            </svg>
          </MapButton>
          <MapDivider />
          <MapButton aria-label="Zoom out">
            <svg width="20" height="20" viewBox="0 0 20 20" fill="none" stroke="#666" strokeWidth="4">
              <path d="M0 10H20" />
            </svg>
          </MapButton>
        </MapControl>
        <MapLogo>Google</MapLogo>
        <Attribution>
          <Credit>Map data ©2020 Google</Credit>
          <CreditLink href="#terms">Terms of Use</CreditLink>
          <CreditLink href="#report">Report a map error</CreditLink>
        </Attribution>
      </MapFrame>

      <Criteria>
        {CRITERIA.map((c) => (
          <CriteriaButton key={c.label}>
            <Icon viewBox="0 0 25 24" aria-hidden="true">
              {c.icon}
            </Icon>
            {c.label}
          </CriteriaButton>
        ))}
      </Criteria>

      <Charts>
        <DataColumn>
          <Label htmlFor="category">Select a category to view detailed data</Label>
          <SelectBox>
            <Select id="category" defaultValue="distance">
              <option value="distance">Sort by distance</option>
            </Select>
            <SelectArrows viewBox="0 0 9 17" aria-hidden="true">
              <path d="M4.5 0.5L8.5 7H0.5ZM4.5 16.5L8.5 10H0.5Z" fill="#000" />
            </SelectArrows>
          </SelectBox>
          <TableWindow>
            <Table>
              <colgroup>
                <col width="70" />
                <col width="66" />
                <col width="124" />
                <col width="102" />
              </colgroup>
              <tbody>
                {ROWS.map(([id, borough, distance], i) => (
                  <tr key={id}>
                    <td>#{i + 12}</td>
                    <td>{id}</td>
                    <td>{borough}</td>
                    <td>{distance}</td>
                  </tr>
                ))}
              </tbody>
            </Table>
          </TableWindow>
          <Button>Download table CSV</Button>
        </DataColumn>
        <ChartColumn>
          <DistanceChart />
        </ChartColumn>
      </Charts>
    </>
  );
}
